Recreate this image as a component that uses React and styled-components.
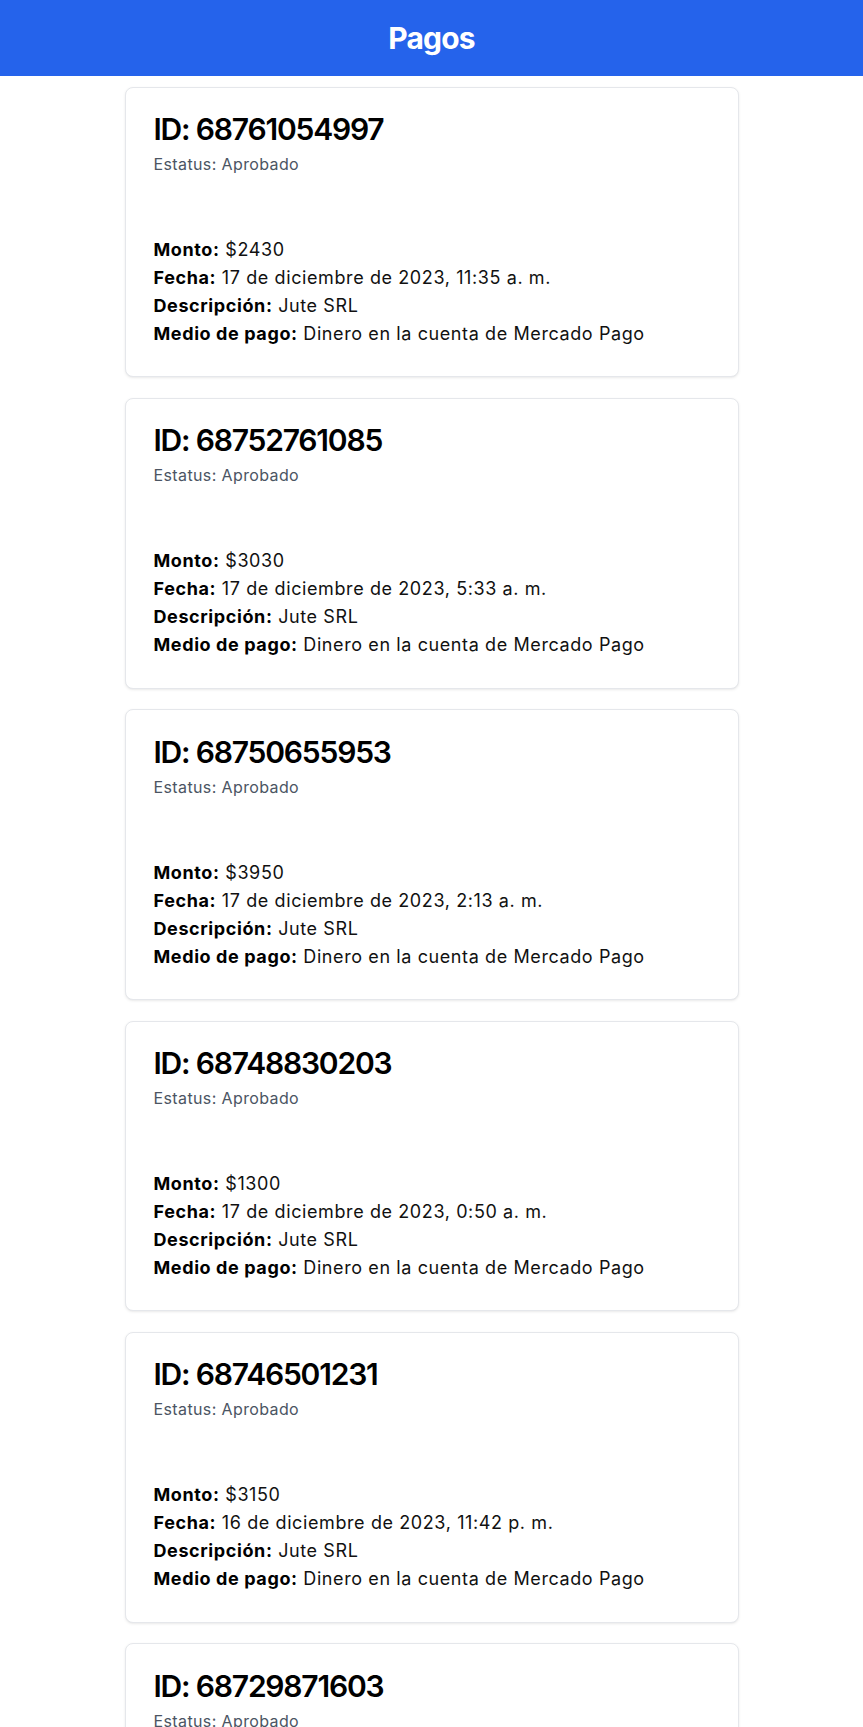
import React from "react";
import styled, { createGlobalStyle } from "styled-components";

const GlobalStyle = createGlobalStyle`
  html, body {
    margin: 0;
    padding: 0;
    background: #ffffff;
  }
  body {
    font-family: Inter, "Noto Sans", "Liberation Sans", sans-serif;
    color: #000000;
  }
  * { box-sizing: border-box; }
`;

const Header = styled.header`
  background: #2563eb;
  height: 76px;
  display: flex;
  align-items: center;
  justify-content: center;
`;

const Title = styled.h1`
  margin: 0;
  color: #ffffff;
  font-size: 30px;
  line-height: 36px;
  font-weight: 700;
  letter-spacing: -0.8px;
`;

const List = styled.main`
  display: flex;
  flex-direction: column;
  align-items: center;
  gap: 20.5px;
  padding: 10.7px 0 40px;
`;

const Card = styled.article`
  width: 614px;
  background: #ffffff;
  border: 1px solid #e5e7eb;
  border-radius: 8px;
  box-shadow: 0 1px 3px 0 rgba(0, 0, 0, 0.08), 0 1px 2px -1px rgba(0, 0, 0, 0.06);
  padding: 23.5px 28px 28.3px;
`;

const PaymentId = styled.h2`
  margin: 0;
  font-size: 30px;
  line-height: 36px;
  font-weight: 600;
  letter-spacing: -1.2px;
  color: #000000;
`;

const Status = styled.p`
  margin: 5px 0 0;
  font-size: 16px;
  line-height: 24px;
  letter-spacing: 0.38px;
  color: #4b5563;
`;

const Details = styled.div`
  margin-top: 60px;
  display: flex;
  flex-direction: column;
`;

const Row = styled.p`
  margin: 0;
  font-size: 18px;
  line-height: 28px;
  letter-spacing: 0.6px;
  color: #111111;
`;

const Label = styled.strong`
  font-weight: 700;
  color: #000000;
`;

const payments = [
  { id: "68761054997", amount: 2430, date: "17 de diciembre de 2023, 11:35 a. m." },
  { id: "68752761085", amount: 3030, date: "17 de diciembre de 2023, 5:33 a. m." },
  { id: "68750655953", amount: 3950, date: "17 de diciembre de 2023, 2:13 a. m." },
  { id: "68748830203", amount: 1300, date: "17 de diciembre de 2023, 0:50 a. m." },
  { id: "68746501231", amount: 3150, date: "16 de diciembre de 2023, 11:42 p. m." },
  { id: "68729871603", amount: 2430, date: "15 de diciembre de 2023, 6:12 p. m." },
];

export default function App() {
  return (
    <>
      <GlobalStyle />
      <Header>
        <Title>Pagos</Title>
      </Header>
      <List>
        {payments.map((p) => (
          <Card key={p.id}>
            <PaymentId>ID: {p.id}</PaymentId>
            <Status>Estatus: Aprobado</Status>
            <Details>
              <Row>
                <Label>Monto:</Label> ${p.amount}
              </Row>
              <Row>
                <Label>Fecha:</Label> {p.date}
              </Row>
              <Row>
                <Label>Descripción:</Label> Jute SRL
              </Row>
              <Row>
                <Label>Medio de pago:</Label> Dinero en la cuenta de Mercado Pago
              </Row>
            </Details>
          </Card>
        ))}
      </List>
    </>
  );
}
